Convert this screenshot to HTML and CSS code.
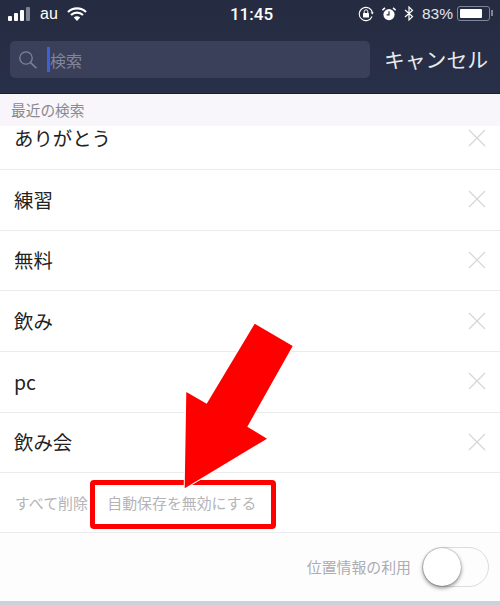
FILE: index.html
```html
<!DOCTYPE html>
<html lang="ja">
<head>
  <meta charset="UTF-8">
  <title>検索</title>
  <link rel="stylesheet" href="styles.css">
</head>
<body>

<div class="screen">
  <!-- Status bar + search -->
  <div class="top">
    <div class="status">
      <div class="status-left">
        <svg class="signal" width="23" height="14" viewBox="0 0 23 14">
          <rect x="0" y="9" width="4" height="5" rx="1" fill="#fff"/>
          <rect x="6" y="6" width="4" height="8" rx="1" fill="#fff"/>
          <rect x="12" y="3" width="4" height="11" rx="1" fill="#fff"/>
          <rect x="18" y="0" width="4" height="14" rx="1" fill="#7d8291"/>
        </svg>
        <span class="carrier">au</span>
        <svg class="wifi" width="20" height="14" viewBox="0 0 20 14">
          <path d="M1 5a13 13 0 0 1 18 0M4 8a8.6 8.6 0 0 1 12 0" fill="none" stroke="#fff" stroke-width="2.2"/>
          <path d="M6.8 10.6a4.4 4.4 0 0 1 6.4 0L10 14z" fill="#fff"/>
        </svg>
      </div>
      <div class="time">11:45</div>
      <div class="status-right">
        <svg width="16" height="16" viewBox="0 0 16 16">
          <path d="M14 10.5A6.6 6.6 0 1 1 14.4 7" fill="none" stroke="#fff" stroke-width="1.1"/>
          <path d="M12.6 6.4h3.2L14.2 8.6z" fill="#fff"/>
          <rect x="5" y="7" width="6" height="4.6" rx=".6" fill="#fff"/>
          <path d="M6.2 7V5.6a1.8 1.8 0 0 1 3.6 0V7" fill="none" stroke="#fff" stroke-width="1"/>
        </svg>
        <svg class="alarm" width="14" height="14" viewBox="0 0 14 14">
          <circle cx="7" cy="7.6" r="5.6" fill="#fff"/>
          <path d="M7 4.2v3.6H4.6" fill="none" stroke="#262d44" stroke-width="1.2"/>
          <path d="M0.4 3.2 3 .8M13.6 3.2 11 .8" stroke="#fff" stroke-width="1.6"/>
        </svg>
        <svg class="bluetooth" width="10" height="15" viewBox="0 0 10 15">
          <path d="M1 4l7.5 6.6L5 14V1l3.5 3.4L1 11" fill="none" stroke="#fff" stroke-width="1.2"/>
        </svg>
        <span class="percent">83%</span>
        <div class="battery"><div class="battery-level" style="width: 83%"></div></div>
      </div>
    </div>
    <div class="search-row">
      <div class="search-box">
        <svg width="20" height="19" viewBox="0 0 20 19">
          <circle cx="8" cy="8" r="6.2" fill="none" stroke="#7f8494" stroke-width="1.3"/>
          <path d="M12.6 12.6 18.5 18.2" stroke="#7f8494" stroke-width="1.5"/>
        </svg>
        <div class="caret"></div>
        <span class="placeholder">検索</span>
      </div>
      <span class="cancel">キャンセル</span>
    </div>
  </div>

  <div class="section-head">最近の検索</div>

  <!-- History list, first row scrolled under the header -->
  <div class="list">
    <div class="row row-first"><span>ありがとう</span><svg class="close" viewBox="0 0 18 18"><path d="M1 1 17 17M17 1 1 17"/></svg></div>
    <div class="row"><span>練習</span><svg class="close" viewBox="0 0 18 18"><path d="M1 1 17 17M17 1 1 17"/></svg></div>
    <div class="row"><span>無料</span><svg class="close" viewBox="0 0 18 18"><path d="M1 1 17 17M17 1 1 17"/></svg></div>
    <div class="row"><span>飲み</span><svg class="close" viewBox="0 0 18 18"><path d="M1 1 17 17M17 1 1 17"/></svg></div>
    <div class="row"><span>pc</span><svg class="close" viewBox="0 0 18 18"><path d="M1 1 17 17M17 1 1 17"/></svg></div>
    <div class="row"><span>飲み会</span><svg class="close" viewBox="0 0 18 18"><path d="M1 1 17 17M17 1 1 17"/></svg></div>
  </div>

  <div class="actions">
    <span>すべて削除</span>
    <span>自動保存を無効にする</span>
  </div>

  <div class="location">
    <span>位置情報の利用</span>
    <div class="toggle"><div class="knob"></div></div>
  </div>

  <div class="bottom-strip"></div>

  <!-- Annotation -->
  <div class="red-box"></div>
  <svg class="arrow" width="500" height="605" viewBox="0 0 500 605">
    <polygon points="254.7,323.7 292.7,346 247.3,426.7 267,438.7 184.7,488.3 186.3,392 206.7,403.7" fill="#fe0000" stroke="#fff" stroke-width="2" paint-order="stroke"/>
  </svg>
</div>

</body>
</html>
```

FILE: styles.css
```css
body {
  margin: 0;
  font-family: "Noto Sans CJK JP", "Liberation Sans", sans-serif;
}
.screen {
  position: relative;
  width: 500px;
  height: 605px;
  overflow: hidden;
  display: flex;
  flex-direction: column;
  background: #fff;
}
.top {
  height: 93px;
  flex: none;
  background: linear-gradient(to bottom, #252b40, #283049);
  border-bottom: 1px solid #1b2030;
}
.status {
  position: relative;
  height: 27px;
  display: flex;
  justify-content: space-between;
  align-items: center;
  color: #fff;
  padding: 0 7px 0 8px;
}
.status-left, .status-right {
  display: flex;
  align-items: center;
}
.carrier {
  font-family: "Liberation Sans", sans-serif;
  font-size: 16px;
  margin-left: 9px;
}
.wifi {
  margin-left: 9px;
}
.time {
  position: absolute;
  left: 3px;
  right: 0;
  text-align: center;
  font-family: Roboto, sans-serif;
  font-weight: 500;
  font-size: 17px;
}
.alarm {
  margin-left: 8px;
}
.bluetooth {
  margin-left: 8px;
}
.percent {
  font-family: "Liberation Sans", sans-serif;
  font-size: 15.5px;
  margin-left: 8px;
  color: #e4e6ec;
}
.battery {
  position: relative;
  width: 33px;
  height: 15px;
  box-sizing: border-box;
  margin: 0 3px 0 4px;
  padding: 2px;
  border: 1px solid #80869a;
  border-radius: 3px;
}
.battery::after {
  content: "";
  position: absolute;
  right: -4px;
  top: 3px;
  width: 2px;
  height: 6px;
  background: #80869a;
}
.battery-level {
  height: 100%;
  background: #fff;
  border-radius: 1px;
}
.search-row {
  display: flex;
  align-items: center;
  padding: 14px 12px 0 10px;
}
.search-box {
  width: 360px;
  height: 37px;
  box-sizing: border-box;
  display: flex;
  align-items: center;
  padding-left: 8px;
  background: #3a4059;
  border-radius: 5px;
}
.caret {
  width: 3px;
  height: 25px;
  margin-left: 9px;
  background: #3f5fd8;
}
.placeholder {
  font-size: 16px;
  color: #80859a;
}
.cancel {
  margin-left: 14px;
  font-size: 20.8px;
  line-height: 1.2;
  color: #e8eaf0;
  white-space: nowrap;
}
.section-head {
  height: 32px;
  flex: none;
  line-height: 31px;
  padding-left: 11px;
  font-size: 14.7px;
  color: #8a8a8e;
  background: #f8f6fb;
}
.list {
  flex: none;
}
.row {
  height: 60.7px;
  box-sizing: border-box;
  display: flex;
  justify-content: space-between;
  align-items: center;
  padding: 0 14px 1px;
  border-bottom: 1px solid #ebebed;
  font-size: 19.4px;
  line-height: 1.2;
  color: #222;
}
.row-first {
  height: 44px;
  padding-bottom: 19px;
}
.close {
  width: 18px;
  height: 18px;
  fill: none;
  stroke: #d6d6d8;
  stroke-width: 1.2;
}
.actions {
  height: 59.5px;
  flex: none;
  box-sizing: border-box;
  display: flex;
  align-items: center;
  gap: 19.5px;
  padding-left: 15px;
  border-bottom: 1px solid #ebebed;
  font-size: 14.9px;
  color: #b4b4b8;
}
.location {
  flex: 1;
  display: flex;
  justify-content: flex-end;
  align-items: center;
  gap: 11px;
  padding-right: 11px;
  font-size: 14.9px;
  color: #acacb2;
  background: #fefdfe;
}
.toggle {
  width: 67px;
  height: 40px;
  box-sizing: border-box;
  border: 1px solid #dcdcdf;
  border-radius: 20px;
}
.knob {
  width: 38px;
  height: 38px;
  background: #fff;
  border-radius: 50%;
  box-shadow: 0 2px 4px rgba(0,0,0,.45), 0 0 1px rgba(0,0,0,.5);
}
.bottom-strip {
  height: 4px;
  flex: none;
  background: #cdd1dc;
}
.red-box {
  position: absolute;
  left: 90px;
  top: 480px;
  width: 186px;
  height: 49px;
  box-sizing: border-box;
  border: 5px solid #fe0000;
  border-radius: 4px;
}
.arrow {
  position: absolute;
  left: 0;
  top: 0;
}
```
